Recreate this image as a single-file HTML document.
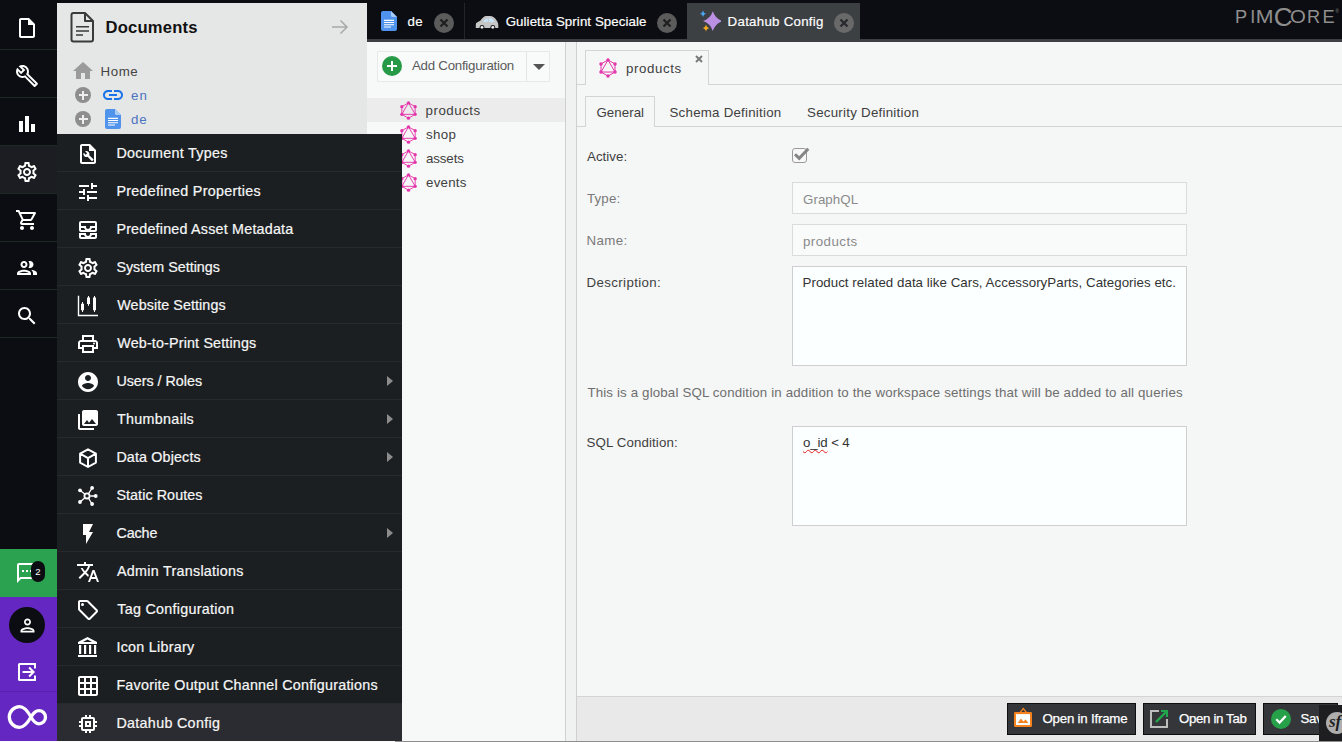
<!DOCTYPE html>
<html lang="en">
<head>
<meta charset="utf-8">
<title>Pimcore - Datahub Config</title>
<style>
*{box-sizing:border-box;margin:0;padding:0}
html,body{width:1342px;height:742px;overflow:hidden}
body{position:relative;background:#0c0d12;font-family:"Liberation Sans","DejaVu Sans",sans-serif;font-size:13.3px;color:#404040}
.abs{position:absolute}
svg{display:block}
span{white-space:nowrap}
/* ---------- left sidebar ---------- */
#sidebar{position:absolute;left:0;top:0;width:57px;height:741px;background:#0c0d12}
#sidebar .nav{position:absolute;left:0;width:57px;height:48px;border-bottom:1px solid #1c2a25}
#sidebar .nav.active{background:#1c1d22}
#sidebar .nav svg{position:absolute;left:15px;top:14px;width:24px;height:24px;fill:#fff}
#notif{position:absolute;left:0;top:549px;width:57px;height:48px;background:#2ba24f}
#notif svg{position:absolute;left:15px;top:12px;width:24px;height:24px;fill:#fff}
#notif .badge{position:absolute;left:31px;top:12px;width:14px;height:21px;border-radius:7px;background:#0c0d12;color:#fff;font-size:9.500px;line-height:21px;text-align:center}
#purple{position:absolute;left:0;top:597px;width:57px;height:144px;background:#6527c1}
#purple .sep{position:absolute;left:0;top:94px;width:57px;height:1px;background:#5722ad}
#purple .avatar{position:absolute;left:9px;top:10px;width:36px;height:36px;border-radius:50%;background:#0c0d12}
#purple .avatar svg{position:absolute;left:7.500px;top:7.500px;width:21px;height:21px;fill:#fff}
#purple .exit{position:absolute;left:15px;top:63px;width:24px;height:24px;fill:#fff}
#purple .inf{position:absolute;left:5px;top:105px;width:46px;height:30px}
/* ---------- documents panel ---------- */
#docs{position:absolute;left:57px;top:3px;width:310px;height:140px;background:#e5e6e6}
#docs .title{position:absolute;left:49px;top:13.500px;font-size:16.600px;line-height:22px;font-weight:bold;color:#111}
#docs .dicon{position:absolute;left:7px;top:6px;width:36px;height:36px;fill:#3a3a3a}
#docs .arrow{position:absolute;left:274px;top:15px;width:18px;height:18px}
.trow{position:absolute;left:0;height:24px;line-height:26px;font-size:13.300px}
.plus{position:absolute;left:18px;top:4px;width:16px;height:16px;border-radius:50%;background:#8e8e8e}
.plus:before{content:"";position:absolute;left:3.500px;top:7px;width:9px;height:2px;background:#eee}
.plus:after{content:"";position:absolute;left:7px;top:3.500px;width:2px;height:9px;background:#eee}
/* ---------- dropdown menu ---------- */
#menu{position:absolute;left:57px;top:134px;width:345px;height:607px;background:#1b1f22;overflow:hidden}
#menu .mi{position:relative;height:38px;border-bottom:1px solid #27292c;color:#f6f6f6;-webkit-text-stroke:.220px #f6f6f6;font-size:14.300px;line-height:39px;padding-left:59.400px;white-space:nowrap}
#menu .mi svg{position:absolute;left:19px;top:8px;width:24px;height:24px;fill:#fff}
#menu .mi.sub:after{content:"";position:absolute;right:9px;top:14px;border-left:6px solid #8c8c8c;border-top:5px solid transparent;border-bottom:5px solid transparent}
#menu .mi.hl{background:#2b2c31;border-bottom:none}
/* ---------- tab bar ---------- */
#tabbar{position:absolute;left:367px;top:0;width:975px;height:39px;background:#0c0d12}
#tabline{position:absolute;left:367px;top:39px;width:975px;height:2.600px;background:#3d4043}
.tab{position:absolute;top:3px;height:37px;color:#fff;-webkit-text-stroke:.180px #fff;font-size:13.300px;line-height:36px;white-space:nowrap}
.tab.active{background:#3d4043}
.tab .txt{position:absolute;top:1px}
.tab .close{position:absolute;top:10px;width:20px;height:20px;border-radius:50%;background:#5b5b5b}
.tab .close svg{position:absolute;left:5px;top:5px;width:10px;height:10px}
.tabsep{position:absolute;top:3px;width:1px;height:36px;background:#20262a}
/* ---------- main ---------- */
#main{position:absolute;left:367px;top:41px;width:975px;height:700px;background:#f6f7f7}
#lpanel{position:absolute;left:0;top:0;width:198px;height:700px;background:#f7f8f8}
#splitter{position:absolute;left:198px;top:0;width:12px;height:700px;background:#f0f1f1;border-left:1px solid #d0d0d0;border-right:1px solid #d0d0d0}
#addbtn{position:absolute;left:10px;top:10px;width:173px;height:31px;border:1px solid #e9e9e9;background:#f9fafa;font-size:13.300px;line-height:29px;color:#5a5a5a}
#addbtn .plusg{position:absolute;left:4px;top:3.500px;width:20px;height:20px;border-radius:50%;background:#279a48}
#addbtn .plusg:before{content:"";position:absolute;left:5px;top:9px;width:10px;height:2px;background:#fff}
#addbtn .plusg:after{content:"";position:absolute;left:9px;top:5px;width:2px;height:10px;background:#fff}
#addbtn .split{position:absolute;left:148px;top:0;width:1px;height:29px;background:#e4e4e4}
#addbtn .caret{position:absolute;left:155px;top:12px;border-top:6px solid #555;border-left:6px solid transparent;border-right:6px solid transparent}
.lrow{position:absolute;left:0;width:198px;height:24px;line-height:24px;font-size:13.300px;color:#404040}
.lrow.sel{background:#ececec}
.lrow svg{position:absolute;left:31.500px;top:2.500px;width:19px;height:19px}
.lrow span{position:absolute;left:59px;top:.500px}
#cpanel{position:absolute;left:210px;top:0;width:765px;height:700px;background:#f5f6f6}
.line{position:absolute;height:1px;background:#d6d3d3}
.vline{position:absolute;width:1px;background:#d6d3d3}
.lbl{position:absolute;left:10px;font-size:13.300px;line-height:20px;color:#404040}
.fld{position:absolute;left:215px;width:395px;border:1px solid #dddada;background:#f9fbfb;font-size:13.300px;color:#8a8a8a;padding-left:10px}
.fld span{position:relative;top:.500px}
.ta{position:absolute;left:215px;width:395px;border:1px solid #cfcfcf;background:#fbffff;font-size:13.300px;color:#333;padding:6px 0 0 10px;line-height:20px}
#bbar{position:absolute;left:0;top:655px;width:765px;height:45px;background:#e9e9e9;border-top:1px solid #d4d4d4}
.btn{position:absolute;top:6px;-webkit-text-stroke:.250px #fff;height:32px;background:#34363a;border:1px solid #0e0e10;color:#fff;font-size:13.300px;line-height:30px;white-space:nowrap}
.btn span{position:absolute;top:0}
#m4,#m5,#m12{position:relative;left:.900px}#m7,#m11{position:relative;left:.600px}#tb1{margin-left:.700px}#l0,#f2,#f3,#f5,#v3,#it1{margin-left:-.500px}#dt,#d0,#tb2,#tb0{margin-left:-.400px}#it0,#f4{margin-left:.400px}
/* fitted letter-spacing */
#m0{letter-spacing:0.302px}#m1{letter-spacing:0.3px}#m2{letter-spacing:0.215px}#m3{letter-spacing:0.019px}#m4{letter-spacing:0.085px}#m5{letter-spacing:0.165px}#m6{letter-spacing:-0.014px}#m7{letter-spacing:0.321px}#m8{letter-spacing:0.15px}#m9{letter-spacing:0.085px}#m10{letter-spacing:-0.09px}#m11{letter-spacing:0.288px}#m12{letter-spacing:0.285px}#m13{letter-spacing:0.277px}#m14{letter-spacing:0.251px}#m15{letter-spacing:0.32px}#tb0{letter-spacing:0.275px}#tb1{letter-spacing:0.079px}#tb2{letter-spacing:0.261px}#dt{letter-spacing:0.195px}#d0{letter-spacing:0.537px}#d1{letter-spacing:0.983px}#d2{letter-spacing:0.787px}#addt{letter-spacing:-0.266px}#l0{letter-spacing:0.53px}#l1{letter-spacing:0.366px}#l2{letter-spacing:-0.112px}#l3{letter-spacing:0.234px}#ot{letter-spacing:0.594px}#it0{letter-spacing:0.058px}#it1{letter-spacing:0.238px}#it2{letter-spacing:0.257px}#f0{letter-spacing:0.052px}#f1{letter-spacing:0.15px}#f2{letter-spacing:0.408px}#f3{letter-spacing:0.374px}#f4{letter-spacing:0.153px}#f5{letter-spacing:0.11px}#v1{letter-spacing:0.057px}#v2{letter-spacing:0.467px}#v3{letter-spacing:0.04px}#v5{letter-spacing:-0.137px}#b0{letter-spacing:-0.22px}#b1{letter-spacing:-0.364px}
</style>
</head>
<body>
<div id="main">
  <div id="lpanel">
    <div id="addbtn"><div class="plusg"></div><span id="addt" class="abs" style="left:34px;top:-1px">Add Configuration</span><div class="split"></div><div class="caret"></div></div>
    <div class="lrow sel" style="top:57px"><svg viewBox="0 0 24 24"><path d="M12.00 2.30 L20.40 7.15 L20.40 16.85 L12.00 21.70 L3.60 16.85 L3.60 7.15ZM12.00 2.30 L20.40 16.85 L3.60 16.85Z" fill="none" stroke="#e535ab" stroke-width="1.200" stroke-linejoin="round"/><circle cx="12.00" cy="2.30" r="2.100" fill="#e535ab"/><circle cx="20.40" cy="7.15" r="2.100" fill="#e535ab"/><circle cx="20.40" cy="16.85" r="2.100" fill="#e535ab"/><circle cx="12.00" cy="21.70" r="2.100" fill="#e535ab"/><circle cx="3.60" cy="16.85" r="2.100" fill="#e535ab"/><circle cx="3.60" cy="7.15" r="2.100" fill="#e535ab"/></svg><span id="l0">products</span></div>
    <div class="lrow" style="top:81px"><svg viewBox="0 0 24 24"><path d="M12.00 2.30 L20.40 7.15 L20.40 16.85 L12.00 21.70 L3.60 16.85 L3.60 7.15ZM12.00 2.30 L20.40 16.85 L3.60 16.85Z" fill="none" stroke="#e535ab" stroke-width="1.200" stroke-linejoin="round"/><circle cx="12.00" cy="2.30" r="2.100" fill="#e535ab"/><circle cx="20.40" cy="7.15" r="2.100" fill="#e535ab"/><circle cx="20.40" cy="16.85" r="2.100" fill="#e535ab"/><circle cx="12.00" cy="21.70" r="2.100" fill="#e535ab"/><circle cx="3.60" cy="16.85" r="2.100" fill="#e535ab"/><circle cx="3.60" cy="7.15" r="2.100" fill="#e535ab"/></svg><span id="l1">shop</span></div>
    <div class="lrow" style="top:105px"><svg viewBox="0 0 24 24"><path d="M12.00 2.30 L20.40 7.15 L20.40 16.85 L12.00 21.70 L3.60 16.85 L3.60 7.15ZM12.00 2.30 L20.40 16.85 L3.60 16.85Z" fill="none" stroke="#e535ab" stroke-width="1.200" stroke-linejoin="round"/><circle cx="12.00" cy="2.30" r="2.100" fill="#e535ab"/><circle cx="20.40" cy="7.15" r="2.100" fill="#e535ab"/><circle cx="20.40" cy="16.85" r="2.100" fill="#e535ab"/><circle cx="12.00" cy="21.70" r="2.100" fill="#e535ab"/><circle cx="3.60" cy="16.85" r="2.100" fill="#e535ab"/><circle cx="3.60" cy="7.15" r="2.100" fill="#e535ab"/></svg><span id="l2">assets</span></div>
    <div class="lrow" style="top:129px"><svg viewBox="0 0 24 24"><path d="M12.00 2.30 L20.40 7.15 L20.40 16.85 L12.00 21.70 L3.60 16.85 L3.60 7.15ZM12.00 2.30 L20.40 16.85 L3.60 16.85Z" fill="none" stroke="#e535ab" stroke-width="1.200" stroke-linejoin="round"/><circle cx="12.00" cy="2.30" r="2.100" fill="#e535ab"/><circle cx="20.40" cy="7.15" r="2.100" fill="#e535ab"/><circle cx="20.40" cy="16.85" r="2.100" fill="#e535ab"/><circle cx="12.00" cy="21.70" r="2.100" fill="#e535ab"/><circle cx="3.60" cy="16.85" r="2.100" fill="#e535ab"/><circle cx="3.60" cy="7.15" r="2.100" fill="#e535ab"/></svg><span id="l3">events</span></div>
  </div>
  <div id="splitter"></div>
  <div id="cpanel">
    <!-- outer tab -->
    <div class="line" style="left:0;top:43px;width:765px"></div>
    <div class="abs" style="left:8px;top:9px;width:124px;height:35px;background:#f5f6f6;border:1px solid #d6d3d3;border-bottom:none"></div>
    <svg class="abs" style="left:21px;top:17px;width:20px;height:20px" viewBox="0 0 24 24"><path d="M12.00 2.30 L20.40 7.15 L20.40 16.85 L12.00 21.70 L3.60 16.85 L3.60 7.15ZM12.00 2.30 L20.40 16.85 L3.60 16.85Z" fill="none" stroke="#e535ab" stroke-width="1.200" stroke-linejoin="round"/><circle cx="12.00" cy="2.30" r="2.100" fill="#e535ab"/><circle cx="20.40" cy="7.15" r="2.100" fill="#e535ab"/><circle cx="20.40" cy="16.85" r="2.100" fill="#e535ab"/><circle cx="12.00" cy="21.70" r="2.100" fill="#e535ab"/><circle cx="3.60" cy="16.85" r="2.100" fill="#e535ab"/><circle cx="3.60" cy="7.15" r="2.100" fill="#e535ab"/></svg>
    <span id="ot" class="abs" style="left:49px;top:18px;line-height:20px;font-size:13.300px">products</span>
    <svg class="abs" style="left:118px;top:14px;width:8px;height:8px" viewBox="0 0 8 8"><path d="M1 1l6 6M7 1L1 7" stroke="#7a7a7a" stroke-width="2" fill="none"/></svg>
    <!-- inner tabs -->
    <div class="line" style="left:0;top:85px;width:765px"></div>
    <div class="abs" style="left:8px;top:55px;width:70px;height:31px;background:#f5f6f6;border:1px solid #d6d3d3;border-bottom:none"></div>
    <span id="it0" class="abs" style="left:19px;top:62px;line-height:20px">General</span>
    <span id="it1" class="abs" style="left:93px;top:62px;line-height:20px">Schema Definition</span>
    <span id="it2" class="abs" style="left:230px;top:62px;line-height:20px">Security Definition</span>
    <!-- form -->
    <div class="lbl" style="top:106px"><span id="f0">Active:</span></div>
    <div class="abs" style="left:215px;top:107px;width:15px;height:15px;border:1.500px solid #9a9a9a;border-radius:3px;background:#f8f8f8"></div>
    <svg class="abs" style="left:215px;top:104px;width:18px;height:18px" viewBox="0 0 18 18"><path d="M3 9.200l4.200 4.200L16.300 3.800" stroke="#858585" stroke-width="3" fill="none"/></svg>
    <div class="lbl" style="top:148px;color:#7a7a7a"><span id="f1">Type:</span></div>
    <div class="fld" style="top:141px;height:32px;line-height:32px"><span id="v1">GraphQL</span></div>
    <div class="lbl" style="top:190px;color:#7a7a7a"><span id="f2">Name:</span></div>
    <div class="fld" style="top:183px;height:32px;line-height:32px"><span id="v2">products</span></div>
    <div class="lbl" style="top:232px"><span id="f3">Description:</span></div>
    <div class="ta" style="top:225px;height:100px"><span id="v3">Product related data like Cars, AccessoryParts, Categories etc.</span></div>
    <div class="lbl" style="top:342px;color:#6e6e6e"><span id="f4">This is a global SQL condition in addition to the workspace settings that will be added to all queries</span></div>
    <div class="lbl" style="top:392px"><span id="f5">SQL Condition:</span></div>
    <div class="ta" style="top:385px;height:100px"><span id="v5"><span style="text-decoration:underline wavy #e02020 1px;text-underline-offset:2px">o_id</span> &lt; 4</span></div>
    <!-- bottom bar -->
    <div id="bbar">
      <div class="btn" style="left:430px;width:129px"><svg class="abs" style="left:5px;top:3px;width:20px;height:20px" viewBox="0 0 20 20"><path d="M7.200 5.300L10.300 1.600 13.400 5.300" fill="none" stroke="#f5821f" stroke-width="1.300"/><rect x="1" y="5" width="18" height="15" rx="1.200" fill="#f5821f"/><rect x="3" y="7.100" width="14" height="10.900" fill="#f8fefe"/><path d="M4.800 15.900L7.900 11.600 10.300 14.600 12.700 12.600 15.400 15.900z" fill="#f5821f"/></svg><span id="b0" style="left:34.500px">Open in Iframe</span></div>
      <div class="btn" style="left:566px;width:113px"><svg class="abs" style="left:5px;top:5px;width:20px;height:20px" viewBox="0 0 20 20"><path d="M10 2H2v16h16v-8" fill="none" stroke="#bdbdbd" stroke-width="2"/><path d="M7 13L17 3" fill="none" stroke="#21a84c" stroke-width="2.400"/><path d="M12 1h7v7h-2V3h-5z" fill="#21a84c"/></svg><span id="b1" style="left:35px">Open in Tab</span></div>
      <div class="btn" style="left:686px;width:75px"><div class="abs" style="left:7px;top:5px;width:20px;height:20px;border-radius:50%;background:#26a149"></div><svg class="abs" style="left:7px;top:5px;width:20px;height:20px" viewBox="0 0 21 21"><path d="M5.500 10.800l3.500 3.500 6.500-7" stroke="#fff" stroke-width="2.400" fill="none"/></svg><span id="b2" style="left:36.500px;letter-spacing:-.300px">Save</span></div>
    </div>
  </div>
  <!-- symfony badge -->
  <div class="abs" style="left:952px;top:664px;width:23px;height:36px;background:#1e1e20;overflow:hidden">
    <div class="abs" style="left:7px;top:7px;width:22px;height:22px;border-radius:50%;background:#aeaeae;color:#1e1e20;font-family:'Liberation Serif','DejaVu Serif',serif;font-style:italic;font-weight:bold;font-size:17px;line-height:20px;padding-left:3px">sf</div>
  </div>
</div>
<div id="tabbar">
  <div class="tab" style="left:1px;width:97px">
    <svg class="abs" style="left:8.500px;top:5.500px;width:24px;height:24px" viewBox="0 0 24 24"><path d="M14 2H6a2 2 0 0 0-2 2v16a2 2 0 0 0 2 2h12a2 2 0 0 0 2-2V8z" fill="#4f93ec"/><path d="M14 2v4.500A1.500 1.500 0 0 0 15.500 8H20z" fill="#a9cbf8"/><path d="M7 10.800h10v1.100H7zM7 13h10v1.100H7zM7 15.200h10v1.100H7zM7 17.400h7v1.100H7z" fill="#fff"/></svg>
    <span id="tb0" class="txt" style="left:40px">de</span>
    <div class="close" style="left:66px"><svg viewBox="0 0 10 10"><path d="M1.500 1.500l7 7M8.500 1.500l-7 7" stroke="#1f1f1f" stroke-width="2.200"/></svg></div>
  </div>
  <div class="tabsep" style="left:97px"></div>
  <div class="tab" style="left:98px;width:222px">
    <svg class="abs" style="left:10px;top:11px;width:24px;height:16px" viewBox="0 0 24 16"><path d="M.800 13.900V10.600Q.800 9 2 8.500L5.500 6.600Q8.600 2.100 11 2.100H15Q19 2.100 22 7Q23.300 9 23.300 11V13.900z" fill="#c6c6c6"/><path d="M7.800 8Q9.600 4.600 12.800 3.900V8zM13.800 3.900H15.300Q18 4.400 19.600 8H13.800z" fill="#c4e3f6"/><circle cx="7" cy="13.300" r="2.400" fill="#15161a"/><circle cx="7" cy="13.300" r="1.400" fill="#f0f4f4"/><circle cx="17.800" cy="13.300" r="2.400" fill="#15161a"/><circle cx="17.800" cy="13.300" r="1.400" fill="#f0f4f4"/></svg>
    <span id="tb1" class="txt" style="left:40px">Gulietta Sprint Speciale</span>
    <div class="close" style="left:192px"><svg viewBox="0 0 10 10"><path d="M1.500 1.500l7 7M8.500 1.500l-7 7" stroke="#1f1f1f" stroke-width="2.200"/></svg></div>
  </div>
  <div class="tab active" style="left:320px;width:173px">
    <svg class="abs" style="left:9.500px;top:6px;width:24px;height:24px" viewBox="0 0 24 24"><path d="M15.8 2.299999999999999Q18.25 9.649999999999999 25.6 12.1Q18.25 14.55 15.8 21.9Q13.350000000000001 14.55 6.0 12.1Q13.350000000000001 9.649999999999999 15.8 2.299999999999999z" fill="#bb90e2"/><path d="M6 1.5999999999999996Q6.48 4.32 9.2 4.8Q6.48 5.279999999999999 6 8.0Q5.52 5.279999999999999 2.8 4.8Q5.52 4.32 6 1.5999999999999996z" fill="#4aa6f2"/><path d="M9 15.4Q9.54 18.46 12.6 19Q9.54 19.54 9 22.6Q8.46 19.54 5.4 19Q8.46 18.46 9 15.4z" fill="#f6a821"/></svg>
    <span id="tb2" class="txt" style="left:41px">Datahub Config</span>
    <div class="close" style="left:147px;background:#696969"><svg viewBox="0 0 10 10"><path d="M1.500 1.500l7 7M8.500 1.500l-7 7" stroke="#26282b" stroke-width="2.200"/></svg></div>
  </div>
  <svg class="abs" style="left:866px;top:5px;width:108px;height:24px" viewBox="0 0 108 24"><g fill="#8f8f8f" font-family="'Liberation Sans',sans-serif" font-size="18.200"><text x="1.900" y="17.800">P</text><text x="17.300" y="17.800">I</text><text transform="translate(22.800 17.800) scale(1.170 1)">M</text><text x="40.700" y="20.900" font-size="26">C</text><text transform="translate(57 17.800) scale(1.120 1)">O</text><text x="74" y="17.800">R</text><text x="89.500" y="17.800">E</text><text x="102.500" y="7.500" font-size="4.500">®</text></g></svg>
</div>
<div id="tabline"></div>
<div id="docs">
  <svg class="dicon" viewBox="0 0 36 36"><path d="M9.500 4H21l8 8v18.500a2 2 0 0 1-2 2H9.500a2 2 0 0 1-2-2v-24.500a2 2 0 0 1 2-2zM21 4v8h8" fill="none" stroke="#3a3a3a" stroke-width="2" stroke-linejoin="round"/><path d="M12 17.100h13v1.500H12zM12 21.200h13v1.500H12zM12 25.300h7v1.500H12z" fill="#3a3a3a"/></svg>
  <div class="title"><span id="dt">Documents</span></div>
  <svg class="arrow" viewBox="0 0 18 18"><path d="M1 9h15M9.500 2.500L16 9l-6.500 6.500" fill="none" stroke="#a9a9a9" stroke-width="1.500"/></svg>
  <div class="trow" style="top:56px"><svg class="abs" style="left:14px;top:0;width:24px;height:24px;fill:#9b9b9b" viewBox="0 0 24 24"><path d="M10 20v-6h4v6h5v-8h3L12 3 2 12h3v8z"/></svg><span id="d0" class="abs" style="left:44px;color:#444">Home</span></div>
  <div class="trow" style="top:80px"><div class="plus"></div><svg class="abs" style="left:44px;top:0;width:24px;height:24px;fill:#1a73e8" viewBox="0 0 24 24"><path d="M3.900 12c0-1.710 1.390-3.100 3.100-3.100h4V7H7c-2.760 0-5 2.240-5 5s2.240 5 5 5h4v-1.900H7c-1.710 0-3.100-1.390-3.100-3.100zM8 13h8v-2H8v2zm9-6h-4v1.900h4c1.710 0 3.100 1.390 3.100 3.100s-1.390 3.100-3.100 3.100h-4V17h4c2.760 0 5-2.240 5-5s-2.240-5-5-5z"/></svg><span id="d1" class="abs" style="left:74px;color:#4a74c0">en</span></div>
  <div class="trow" style="top:104px"><div class="plus"></div><svg class="abs" style="left:44px;top:0;width:24px;height:24px" viewBox="0 0 24 24"><path d="M14 2H6a2 2 0 0 0-2 2v16a2 2 0 0 0 2 2h12a2 2 0 0 0 2-2V8z" fill="#4f93ec"/><path d="M14 2v4.500A1.500 1.500 0 0 0 15.500 8H20z" fill="#a9cbf8"/><path d="M7 10.800h10v1.100H7zM7 13h10v1.100H7zM7 15.200h10v1.100H7zM7 17.400h7v1.100H7z" fill="#fff"/></svg><span id="d2" class="abs" style="left:74px;color:#4a74c0">de</span></div>
</div>
<div id="sidebar">
<div class="nav" style="top:2px"><svg viewBox="0 0 24 24" ><path d="M14 2H6c-1.1 0-1.990.9-1.990 2L4 20c0 1.100.890 2 1.990 2H18c1.100 0 2-.9 2-2V8l-6-6zM6 20V4h7v5h5v11H6z"/></svg></div>
<div class="nav" style="top:50px"><svg viewBox="0 0 24 24" ><path d="M22.610 18.990l-9.080-9.080c.930-2.340.450-5.100-1.440-7C9.790.610 6.210.400 3.660 2.260L7.500 6.110 6.080 7.520 2.250 3.690C.390 6.230.600 9.820 2.900 12.110c1.860 1.860 4.570 2.350 6.890 1.480l9.110 9.110c.390.390 1.020.390 1.410 0l2.300-2.300c.400-.380.400-1.010 0-1.410zm-3 1.600l-9.460-9.460c-.610.450-1.290.720-2 .820-1.360.200-2.790-.210-3.830-1.250C3.370 9.760 2.930 8.500 3 7.260l3.090 3.090 4.240-4.240-3.090-3.090c1.240-.070 2.490.370 3.440 1.310 1.080 1.080 1.490 2.570 1.240 3.960-.120.710-.420 1.370-.880 1.960l9.450 9.450-.880.890z"/></svg></div>
<div class="nav" style="top:98px"><svg viewBox="0 0 24 24" ><path d="M4 20h4V9H4zM10 20h4V4h-4zM16 20h4v-8h-4z"/></svg></div>
<div class="nav active" style="top:146px"><svg viewBox="0 0 24 24" ><path d="M19.430 12.980c.040-.320.070-.640.070-.980 0-.340-.030-.660-.070-.980l2.110-1.650c.190-.150.240-.420.120-.640l-2-3.460c-.090-.160-.260-.250-.440-.250-.060 0-.120.010-.170.030l-2.490 1c-.520-.400-1.080-.730-1.690-.980l-.380-2.650C14.460 2.180 14.250 2 14 2h-4c-.250 0-.460.180-.490.420l-.380 2.650c-.610.250-1.170.590-1.690.980l-2.490-1c-.060-.020-.120-.030-.180-.030-.170 0-.340.090-.430.250l-2 3.460c-.130.220-.070.490.120.640l2.110 1.650c-.040.320-.070.650-.070.980 0 .330.030.660.070.980l-2.110 1.650c-.190.150-.240.420-.120.640l2 3.460c.090.160.260.250.440.250.060 0 .120-.010.170-.030l2.490-1c.520.400 1.080.730 1.690.980l.380 2.650c.030.240.240.420.490.420h4c.250 0 .460-.180.490-.420l.380-2.650c.610-.250 1.170-.590 1.690-.980l2.490 1c.060.020.120.030.180.030.170 0 .340-.090.430-.250l2-3.460c.120-.220.070-.490-.120-.640l-2.110-1.650zm-1.980-1.710c.040.310.050.520.050.730 0 .210-.020.430-.050.730l-.140 1.130.890.700 1.080.840-.700 1.210-1.270-.510-1.040-.420-.900.680c-.430.320-.840.560-1.250.730l-1.060.430-.160 1.130-.200 1.350h-1.400l-.190-1.350-.160-1.130-1.060-.430c-.430-.180-.830-.410-1.230-.710l-.910-.700-1.060.430-1.270.510-.700-1.210 1.080-.840.890-.700-.140-1.130c-.030-.310-.050-.540-.050-.740s.020-.430.050-.730l.140-1.130-.890-.700-1.080-.840.700-1.210 1.270.510 1.040.420.900-.680c.430-.320.840-.560 1.250-.730l1.060-.430.160-1.130.200-1.350h1.390l.190 1.350.160 1.130 1.060.430c.430.180.830.410 1.230.710l.910.700 1.060-.430 1.270-.510.700 1.210-1.070.850-.890.700.140 1.130zM12 8c-2.210 0-4 1.790-4 4s1.790 4 4 4 4-1.790 4-4-1.790-4-4-4zm0 6c-1.100 0-2-.9-2-2s.9-2 2-2 2 .9 2 2-.9 2-2 2z"/></svg></div>
<div class="nav" style="top:194px"><svg viewBox="0 0 24 24" ><path d="M15.550 13c.750 0 1.410-.410 1.750-1.030l3.580-6.490c.370-.660-.110-1.480-.870-1.480H5.210l-.940-2H1v2h2l3.600 7.590-1.350 2.440C4.520 15.370 5.480 17 7 17h12v-2H7l1.100-2h7.450zM6.160 6h12.150l-2.760 5H8.530L6.160 6zM7 18c-1.100 0-1.990.9-1.990 2S5.900 22 7 22s2-.9 2-2-.9-2-2-2zm10 0c-1.100 0-1.990.9-1.990 2s.890 2 1.990 2 2-.9 2-2-.9-2-2-2z"/></svg></div>
<div class="nav" style="top:242px"><svg viewBox="0 0 24 24" ><path d="M9 13.750c-2.340 0-7 1.170-7 3.500V19h14v-1.750c0-2.330-4.660-3.500-7-3.500zM4.340 17c.840-.580 2.870-1.250 4.660-1.250s3.820.670 4.660 1.250H4.340zM9 12c1.930 0 3.500-1.570 3.500-3.500S10.930 5 9 5 5.500 6.570 5.500 8.500 7.070 12 9 12zm0-5c.830 0 1.500.670 1.500 1.500S9.830 10 9 10s-1.500-.670-1.500-1.500S8.170 7 9 7zm7.040 6.810c1.160.840 1.960 1.960 1.960 3.440V19h4v-1.750c0-2.020-3.500-3.170-5.960-3.440zM15 12c1.930 0 3.500-1.570 3.500-3.500S16.930 5 15 5c-.540 0-1.040.130-1.500.350.630.890 1 1.980 1 3.150s-.370 2.260-1 3.150c.460.220.960.350 1.500.350z"/></svg></div>
<div class="nav" style="top:290px"><svg viewBox="0 0 24 24" ><path d="M15.500 14h-.790l-.280-.270C15.410 12.590 16 11.110 16 9.500 16 5.910 13.090 3 9.500 3S3 5.910 3 9.500 5.910 16 9.500 16c1.610 0 3.090-.590 4.230-1.570l.270.280v.790l5 4.990L20.490 19l-4.990-5zm-6 0C7.010 14 5 11.990 5 9.500S7.010 5 9.500 5 14 7.010 14 9.500 11.990 14 9.500 14z"/></svg></div>

  <div id="notif"><svg viewBox="0 0 24 24"><path d="M20 2H4c-1.100 0-2 .9-2 2v18l4-4h14c1.100 0 2-.9 2-2V4c0-1.100-.9-2-2-2zm0 14H5.170L4 17.170V4h16v12zM7 9h2v2H7zm4 0h2v2h-2zm4 0h2v2h-2z"/></svg><div class="badge">2</div></div>
  <div id="purple">
    <div class="avatar"><svg viewBox="0 0 24 24"><path d="M12 6c1.100 0 2 .9 2 2s-.9 2-2 2-2-.9-2-2 .9-2 2-2m0 10c2.700 0 5.800 1.290 6 2H6c.230-.720 3.310-2 6-2m0-12C9.790 4 8 5.790 8 8s1.790 4 4 4 4-1.790 4-4-1.790-4-4-4zm0 10c-2.670 0-8 1.340-8 4v2h16v-2c0-2.660-5.330-4-8-4z"/></svg></div>
    <svg class="exit" viewBox="0 0 24 24"><path d="M4.500 3H21v5.500h-2V5H5v14h14v-3.500h2V21H4.500A1.500 1.500 0 0 1 3 19.500v-15A1.500 1.500 0 0 1 4.500 3z"/><path d="M7.500 11h8.700l-2.800-2.800 1.400-1.400L20 12l-5.200 5.200-1.400-1.400 2.800-2.800H7.500z"/></svg>
    <div class="sep"></div>
    <svg class="inf" viewBox="0 0 46 30"><path d="M26 15C22 8 19 4.700 14.600 4.700A10.300 10.300 0 1 0 14.600 25.300C19 25.300 22 22 26 15C28.500 10.500 31 8.600 33.900 8.600A6.600 6.600 0 1 1 33.900 21.800C31 21.800 28.500 19.500 26 15Z" fill="none" stroke="#fff" stroke-width="3.300" stroke-linejoin="round"/></svg>
  </div>
</div>
<div id="menu">
<div class="mi"><svg viewBox="0 0 24 24" ><path d="M14 2H6c-1.1 0-1.990.9-1.990 2L4 20c0 1.100.890 2 1.990 2H18c1.100 0 2-.9 2-2V8l-6-6zM6 20V4h7v5h5v11H6z"/><g transform="translate(7 8.600) scale(.46)"><path d="M22.700 19l-9.100-9.100c.9-2.300.4-5-1.500-6.900-2-2-5-2.400-7.400-1.300L9 6 6 9 1.600 4.700C.4 7.100.9 10.100 2.900 12.100c1.900 1.900 4.600 2.400 6.900 1.500l9.100 9.100c.4.400 1 .4 1.400 0l2.300-2.300c.5-.4.500-1.100.1-1.400z"/></g></svg><span id="m0">Document Types</span></div>
<div class="mi"><svg viewBox="0 0 24 24" ><path d="M3 17v2h6v-2H3zM3 5v2h10V5H3zm10 16v-2h8v-2h-8v-2h-2v6h2zM7 9v2H3v2h4v2h2V9H7zm14 4v-2H11v2h10zm-6-4h2V7h4V5h-4V3h-2v6z"/></svg><span id="m1">Predefined Properties</span></div>
<div class="mi"><svg viewBox="0 0 24 24" ><path d="M19 3H5c-1.100 0-2 .9-2 2v7c0 1.100.9 2 2 2h14c1.100 0 2-.9 2-2V5c0-1.100-.9-2-2-2zM5 10h3.130c.210.780.670 1.470 1.270 2H5v-2zm14 2h-4.400c.600-.530 1.060-1.220 1.270-2H19v2zm0-4h-5v1c0 1.070-.930 2-2 2s-2-.930-2-2V8H5V5h14v3zm-2 7h-3v1c0 .470-.190.9-.480 1.250-.370.450-.920.750-1.520.750s-1.150-.3-1.520-.750c-.290-.350-.480-.780-.480-1.250v-1H3v4c0 1.100.9 2 2 2h14c1.100 0 2-.9 2-2v-4h-4zM5 17h3.130c.020.090.060.170.090.250.240.680.650 1.280 1.180 1.750H5v-2zm14 2h-4.400c.540-.470.950-1.070 1.180-1.750.030-.080.070-.160.090-.250H19v2z"/></svg><span id="m2">Predefined Asset Metadata</span></div>
<div class="mi"><svg viewBox="0 0 24 24" ><path d="M19.430 12.980c.040-.320.070-.640.070-.980 0-.340-.030-.660-.070-.980l2.110-1.650c.190-.150.240-.420.120-.640l-2-3.460c-.090-.160-.260-.250-.440-.250-.060 0-.120.010-.170.030l-2.490 1c-.520-.400-1.080-.730-1.690-.980l-.380-2.650C14.460 2.180 14.250 2 14 2h-4c-.250 0-.460.180-.490.420l-.380 2.650c-.610.250-1.170.590-1.690.980l-2.490-1c-.060-.020-.120-.030-.180-.030-.170 0-.340.090-.430.250l-2 3.460c-.130.220-.070.490.120.640l2.110 1.650c-.040.320-.070.650-.070.980 0 .330.030.660.070.980l-2.110 1.650c-.190.150-.240.420-.120.640l2 3.460c.090.160.260.250.440.250.060 0 .120-.010.170-.030l2.490-1c.520.400 1.080.730 1.690.980l.380 2.650c.030.240.240.420.490.420h4c.250 0 .460-.180.490-.420l.380-2.650c.610-.250 1.170-.590 1.690-.980l2.490 1c.060.020.120.030.180.030.170 0 .340-.090.430-.250l2-3.460c.120-.220.070-.490-.120-.640l-2.110-1.650zm-1.980-1.710c.040.310.050.520.050.730 0 .210-.020.430-.050.730l-.140 1.130.890.700 1.080.840-.700 1.210-1.270-.510-1.040-.420-.900.680c-.430.320-.840.560-1.250.730l-1.060.430-.160 1.130-.200 1.350h-1.400l-.190-1.350-.160-1.130-1.060-.430c-.430-.180-.830-.410-1.230-.710l-.910-.700-1.060.430-1.270.510-.700-1.210 1.080-.840.890-.700-.140-1.130c-.030-.310-.050-.540-.050-.740s.020-.430.050-.730l.140-1.130-.890-.700-1.080-.840.700-1.210 1.270.510 1.040.420.900-.680c.430-.320.840-.560 1.250-.730l1.060-.430.160-1.130.200-1.350h1.390l.190 1.350.160 1.130 1.060.430c.430.180.830.410 1.230.710l.910.700 1.060-.430 1.270-.510.700 1.210-1.070.850-.890.700.140 1.130zM12 8c-2.210 0-4 1.790-4 4s1.790 4 4 4 4-1.790 4-4-1.790-4-4-4zm0 6c-1.100 0-2-.9-2-2s.9-2 2-2 2 .9 2 2-.9 2-2 2z"/></svg><span id="m3">System Settings</span></div>
<div class="mi"><svg viewBox="0 0 24 24" ><path d="M1.800 1.800h1.400v19h18.800v1.400H1.800z"/><path d="M6 8h1v1.800h1v6.500H7V18H6v-1.700H5V9.800h1zM12 2h1v1.500h1V10h-1v1.700h-1V10h-1V3.500h1zM18 2h1v1.500h1v12.800h-1V18h-1v-1.700h-1V3.500h1z"/></svg><span id="m4">Website Settings</span></div>
<div class="mi"><svg viewBox="0 0 24 24" ><path d="M19 8h-1V3H6v5H5c-1.660 0-3 1.340-3 3v6h4v4h12v-4h4v-6c0-1.660-1.340-3-3-3zM8 5h8v3H8V5zm8 12v2H8v-4h8v2zm2-2v-2H6v2H4v-4c0-.550.450-1 1-1h14c.550 0 1 .450 1 1v4h-2z"/><circle cx="18" cy="11.500" r="1"/></svg><span id="m5">Web-to-Print Settings</span></div>
<div class="mi sub"><svg viewBox="0 0 24 24" ><path d="M12 2C6.480 2 2 6.480 2 12s4.480 10 10 10 10-4.480 10-10S17.520 2 12 2zm0 3c1.660 0 3 1.340 3 3s-1.340 3-3 3-3-1.340-3-3 1.340-3 3-3zm0 14.200c-2.500 0-4.710-1.280-6-3.220.030-1.990 4-3.080 6-3.080 1.990 0 5.970 1.090 6 3.080-1.290 1.940-3.500 3.220-6 3.220z"/></svg><span id="m6">Users / Roles</span></div>
<div class="mi sub"><svg viewBox="0 0 24 24" ><path d="M22 16V4c0-1.100-.9-2-2-2H8c-1.100 0-2 .9-2 2v12c0 1.100.9 2 2 2h12c1.100 0 2-.9 2-2zm-11-4l2.030 2.710L16 11l4 5H8l3-4zM2 6v14c0 1.100.9 2 2 2h14v-2H4V6H2z"/></svg><span id="m7">Thumbnails</span></div>
<div class="mi sub"><svg viewBox="0 0 24 24" ><path d="M12 3.300L4.100 7.700v8.900L12 21l7.900-4.400V7.700zM12 12.200V21M4.100 7.700l7.900 4.500 7.900-4.500" fill="none" stroke="#fff" stroke-width="2" stroke-linejoin="round"/></svg><span id="m8">Data Objects</span></div>
<div class="mi"><svg viewBox="0 0 24 24" ><g stroke="#fff" stroke-width="1.300" fill="none"><path d="M4 6.300L9 10.200M16.100 4L12.700 9.300M19.500 12H14.300M4 18l5-4.200M16 20l-3.300-5.500"/><circle cx="11" cy="11.900" r="2.600" stroke-width="1.800"/></g><circle cx="4" cy="6.300" r="1.900"/><circle cx="16.100" cy="3.900" r="1.900"/><circle cx="19.700" cy="12" r="1.900"/><circle cx="4" cy="18" r="1.900"/><circle cx="16.100" cy="20" r="1.900"/></svg><span id="m9">Static Routes</span></div>
<div class="mi sub"><svg viewBox="0 0 24 24" ><path d="M7 2v11h3v9l7-12h-4l4-8z"/></svg><span id="m10">Cache</span></div>
<div class="mi"><svg viewBox="0 0 24 24" ><path d="M12.870 15.070l-2.540-2.510.030-.030c1.740-1.940 2.980-4.170 3.710-6.530H17V4h-7V2H8v2H1v1.990h11.170C11.500 7.920 10.440 9.750 9 11.350 8.070 10.320 7.300 9.190 6.690 8h-2c.730 1.630 1.730 3.170 2.980 4.560l-5.090 5.020L4 19l5-5 3.110 3.110.760-2.040zM18.500 10h-2L12 22h2l1.120-3h4.750L21 22h2l-4.500-12zm-2.620 7l1.620-4.330L19.120 17h-3.240z"/></svg><span id="m11">Admin Translations</span></div>
<div class="mi"><svg viewBox="0 0 24 24" ><path d="M21.410 11.580l-9-9C12.050 2.220 11.550 2 11 2H4c-1.100 0-2 .9-2 2v7c0 .550.220 1.050.590 1.420l9 9c.360.360.860.580 1.410.580s1.050-.220 1.410-.590l7-7c.370-.360.590-.860.590-1.410s-.230-1.060-.590-1.420zM13 20.010L4 11V4h7v-.010l9 9-7 7.020z"/><circle cx="6.500" cy="6.500" r="1.500"/></svg><span id="m12">Tag Configuration</span></div>
<div class="mi"><svg viewBox="0 0 24 24" ><path fill-rule="evenodd" d="M11.5 1L2 6v2h19V6zM7 5.900l4.500-2.500 4.500 2.500z"/><path d="M3 9h2.200v9H3zM8 9h2.200v9H8zM13 9h2.200v9H13zM18 9h2.200v9H18zM2 19h19v2.100H2z"/></svg><span id="m13">Icon Library</span></div>
<div class="mi"><svg viewBox="0 0 24 24" ><path d="M20 2H4c-1.100 0-2 .9-2 2v16c0 1.100.9 2 2 2h16c1.100 0 2-.9 2-2V4c0-1.100-.9-2-2-2zM8 20H4v-4h4v4zm0-6H4v-4h4v4zm0-6H4V4h4v4zm6 12h-4v-4h4v4zm0-6h-4v-4h4v4zm0-6h-4V4h4v4zm6 12h-4v-4h4v4zm0-6h-4v-4h4v4zm0-6h-4V4h4v4z"/></svg><span id="m14">Favorite Output Channel Configurations</span></div>
<div class="mi hl"><svg viewBox="0 0 24 24" ><path d="M15 9H9v6h6V9zm-2 4h-2v-2h2v2zm8-2V9h-2V7c0-1.100-.9-2-2-2h-2V3h-2v2h-2V3H9v2H7c-1.100 0-2 .9-2 2v2H3v2h2v2H3v2h2v2c0 1.100.9 2 2 2h2v2h2v-2h2v2h2v-2h2c1.100 0 2-.9 2-2v-2h2v-2h-2v-2h2zm-4 6H7V7h10v10z"/></svg><span id="m15">Datahub Config</span></div>

</div>
<div class="abs" style="left:0;top:741px;width:395px;height:1px;background:#fafafa"></div>
<div class="abs" style="left:395px;top:741px;width:947px;height:1px;background:#8e8e8e"></div>
</body>
</html>
